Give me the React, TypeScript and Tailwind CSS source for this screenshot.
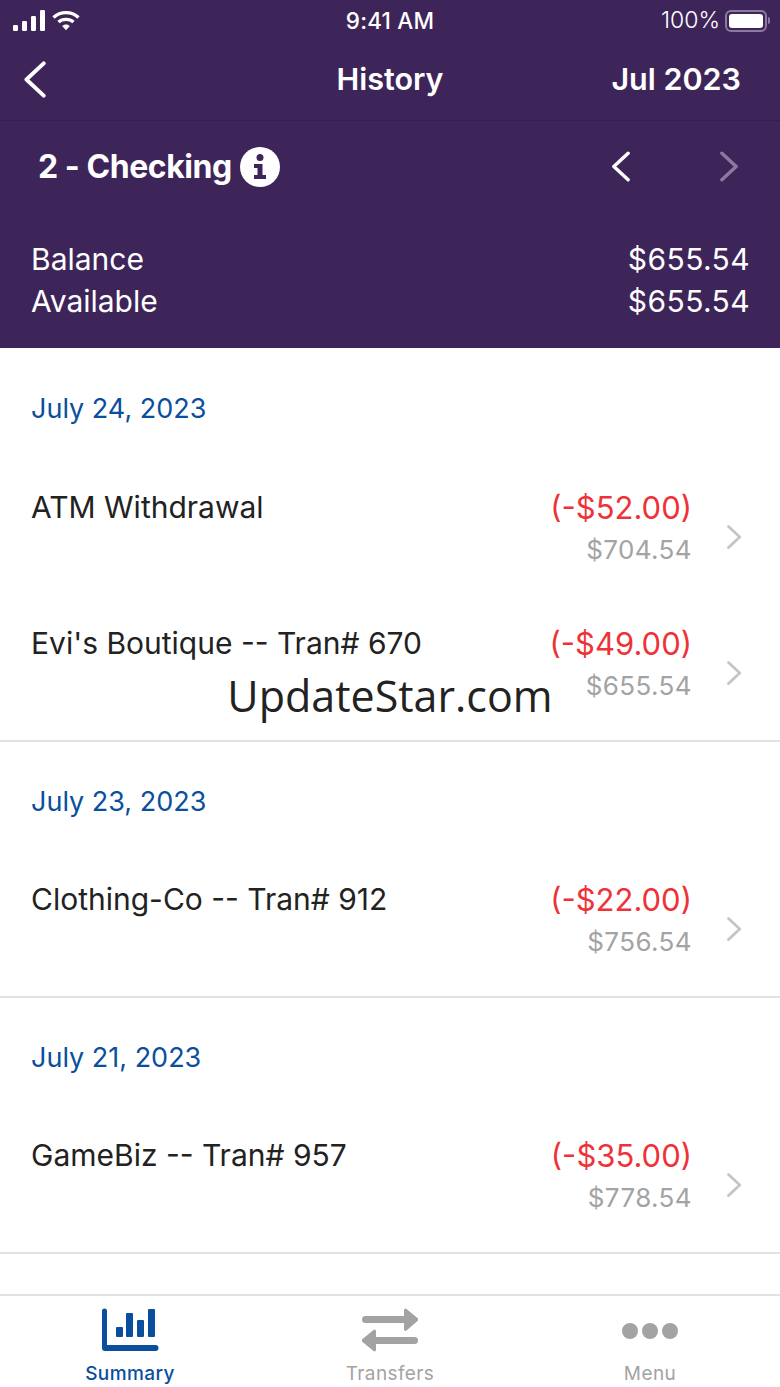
import React from 'react'

const SECTIONS = [
  {
    date: 'July 24, 2023',
    rows: [
      { title: 'ATM Withdrawal', amount: '(-$52.00)', balance: '$704.54' },
      { title: "Evi's Boutique -- Tran# 670", amount: '(-$49.00)', balance: '$655.54' },
    ],
  },
  {
    date: 'July 23, 2023',
    rows: [{ title: 'Clothing-Co -- Tran# 912', amount: '(-$22.00)', balance: '$756.54' }],
  },
  {
    date: 'July 21, 2023',
    rows: [{ title: 'GameBiz -- Tran# 957', amount: '(-$35.00)', balance: '$778.54' }],
  },
]

function Chevron({ dir, className, w, h, sw }: { dir: 'left' | 'right'; className: string; w: number; h: number; sw: number }) {
  return (
    <svg width={w} height={h} viewBox="0 0 20 32" className={className} fill="none" stroke="currentColor" strokeWidth={sw} strokeLinecap="round" strokeLinejoin="round">
      <path d={dir === 'left' ? 'M18 2 L3 16 L18 30' : 'M2 2 L17 16 L2 30'} />
    </svg>
  )
}

function StatusBar() {
  return (
    <div className="relative flex h-10 items-center justify-between pl-[13px] pr-[10px] pt-[1px] text-white">
      <div className="flex items-center gap-[8px]">
        <svg width="34" height="21" viewBox="0 0 34 21" fill="currentColor">
          <rect x="0" y="15" width="5" height="6" rx="1.2" />
          <rect x="9" y="11" width="5" height="10" rx="1.2" />
          <rect x="18" y="6" width="5" height="15" rx="1.2" />
          <rect x="27" y="0" width="5" height="21" rx="1.2" />
        </svg>
        <svg width="28" height="21" viewBox="0 0 28 21" fill="none" stroke="currentColor" strokeWidth="3.4" className="-ml-[3px]">
          <path d="M1.5 7.5 C8.5 1 19.5 1 26.5 7.5" />
          <path d="M6.5 12 C10.5 8.5 17.5 8.5 21.5 12" />
          <path d="M10.5 16 L14 20 L17.5 16 C15.5 14.2 12.5 14.2 10.5 16 Z" fill="currentColor" strokeWidth="0.5" />
        </svg>
      </div>
      <span className="absolute inset-x-0 text-center text-[22.5px] font-medium tracking-[0.2px]">9:41 AM</span>
      <div className="flex items-center gap-[5px]">
        <span className="text-[23px] font-light">100%</span>
        <div className="flex items-center">
          <div className="h-[22px] w-[42px] rounded-[6px] border-2 border-[#8a7a9f] p-[2px]">
            <div className="h-full w-full rounded-[3px] bg-white" />
          </div>
          <div className="ml-[1px] h-[7px] w-[2px] rounded-r-sm bg-[#8a7a9f]" />
        </div>
      </div>
    </div>
  )
}

function Header() {
  return (
    <div className="bg-[#3e2559] text-white">
      <StatusBar />
      <div className="relative flex h-[81px] items-center justify-between border-b border-[#361e50] pb-[1px] pl-[23px] pr-[39px]">
        <Chevron dir="left" className="text-white" w={23} h={37} sw={3.4} />
        <span className="absolute inset-x-0 -mt-[2px] text-center text-[30.5px] font-semibold">History</span>
        <span className="-mt-[2px] text-[30.5px] font-semibold">Jul 2023</span>
      </div>
      <div className="flex h-[89px] items-center justify-between pl-[38px] pr-[41px] pt-[2px]">
        <div className="flex items-center gap-[8px]">
          <span className="text-[32px] font-bold tracking-[-0.45px]">2 - Checking</span>
          <div className="flex h-[40px] w-[40px] items-center justify-center rounded-full bg-white">
            <svg width="14" height="26" viewBox="0 0 14 26" fill="#3e2559">
              <circle cx="7" cy="3.5" r="3.5" />
              <path d="M1 10 H9.5 V21 H13 V25 H1 V21 H4.5 V14 H1 Z" />
            </svg>
          </div>
        </div>
        <div className="flex items-center gap-[90px]">
          <Chevron dir="left" className="text-white" w={19} h={31} sw={3.6} />
          <Chevron dir="right" className="text-[#8a7a9f]" w={19} h={31} sw={3.6} />
        </div>
      </div>
      <div className="flex flex-col gap-[12px] pb-[32px] pl-[31px] pr-[30px] pt-[34px] text-[30px] leading-[30px]">
        <div className="flex justify-between">
          <span>Balance</span>
          <span className="tracking-[0.4px]">$655.54</span>
        </div>
        <div className="flex justify-between">
          <span>Available</span>
          <span className="tracking-[0.4px]">$655.54</span>
        </div>
      </div>
    </div>
  )
}

function TabBar() {
  return (
    <div className="grid h-[93px] shrink-0 grid-cols-3 border-t-2 border-[#e2e2e2] bg-white text-[19px] font-normal tracking-[0.4px]">
      <div className="flex flex-col items-center text-[#0a4f9e]">
        <svg width="58" height="44" viewBox="0 0 58 44" fill="currentColor" className="mt-[12px]">
          <path d="M1 3 a2.5 2.5 0 0 1 5 0 V37 H54.5 a3 3 0 0 1 0 6 H4 a3 3 0 0 1 -3 -3 Z" />
          <rect x="15" y="19" width="7" height="10" rx="1" />
          <rect x="25" y="5" width="7" height="24" rx="1" />
          <rect x="36" y="12" width="7" height="17" rx="1" />
          <rect x="47" y="1" width="7" height="28" rx="1" />
        </svg>
        <span className="mt-[8px] font-medium">Summary</span>
      </div>
      <div className="flex flex-col items-center text-[#a3a3a3]">
        <svg width="56" height="44" viewBox="0 0 56 44" fill="currentColor" className="mt-[12px]">
          <path d="M3.5 8 H42 V2 a1.5 1.5 0 0 1 2.5 -1 L55.5 10 a2 2 0 0 1 0 3 L44.5 22.5 a1.5 1.5 0 0 1 -2.5 -1 V15 H3.5 a3.5 3.5 0 0 1 0 -7 Z" />
          <path d="M52.5 29 H14 V23 a1.5 1.5 0 0 0 -2.5 -1 L0.5 31 a2 2 0 0 0 0 3 L11.5 43 a1.5 1.5 0 0 0 2.5 -1 V36 H52.5 a3.5 3.5 0 0 0 0 -7 Z" />
        </svg>
        <span className="mt-[8px]">Transfers</span>
      </div>
      <div className="flex flex-col items-center text-[#a3a3a3]">
        <div className="mt-[27px] flex h-[16px] gap-[4px]">
          <div className="h-[16px] w-[16px] rounded-full bg-[#a3a3a3]" />
          <div className="h-[16px] w-[16px] rounded-full bg-[#a3a3a3]" />
          <div className="h-[16px] w-[16px] rounded-full bg-[#a3a3a3]" />
        </div>
        <span className="mt-[21px]">Menu</span>
      </div>
    </div>
  )
}

export default function App() {
  return (
    <div className="relative flex h-[1387px] w-[780px] flex-col overflow-hidden bg-white font-['Inter',sans-serif]">
      <Header />

      {/* Transactions list */}
      <div className="flex-1 overflow-hidden">
        {SECTIONS.map((section, i) => (
          <div key={section.date} className="border-b-2 border-[#e2e2e2]">
            <div className={`flex items-center px-[31px] pt-[2px] text-[27px] text-[#0a4f9e] ${i === 0 ? 'h-[120px]' : 'h-[118px]'}`}>
              {section.date}
            </div>
            {section.rows.map((row) => (
              <div key={row.title} className="flex h-[136px] justify-between pl-[31px] pr-[38px]">
                <span className="mt-[20px] text-[30px] leading-[38px] text-[#222222]">{row.title}</span>
                <div className="flex items-center gap-[35px]">
                  <div className="mb-[15px] flex flex-col items-end">
                    <span className="text-[31px] leading-[38px] text-[#ee3338]">{row.amount}</span>
                    <span className="mt-[5px] text-[26px] leading-[36px] tracking-[0.4px] text-[#a3a3a3]">{row.balance}</span>
                  </div>
                  <Chevron dir="right" className="mt-[2px] text-[#c4c4c4]" w={15} h={24} sw={3.6} />
                </div>
              </div>
            ))}
          </div>
        ))}
      </div>

      <TabBar />

      {/* Watermark */}
      <span className="absolute left-0 right-0 top-[668px] text-center font-['Open_Sans',sans-serif] text-[43px] leading-[56px] text-[#222222]">
        UpdateStar.com
      </span>
    </div>
  )
}
